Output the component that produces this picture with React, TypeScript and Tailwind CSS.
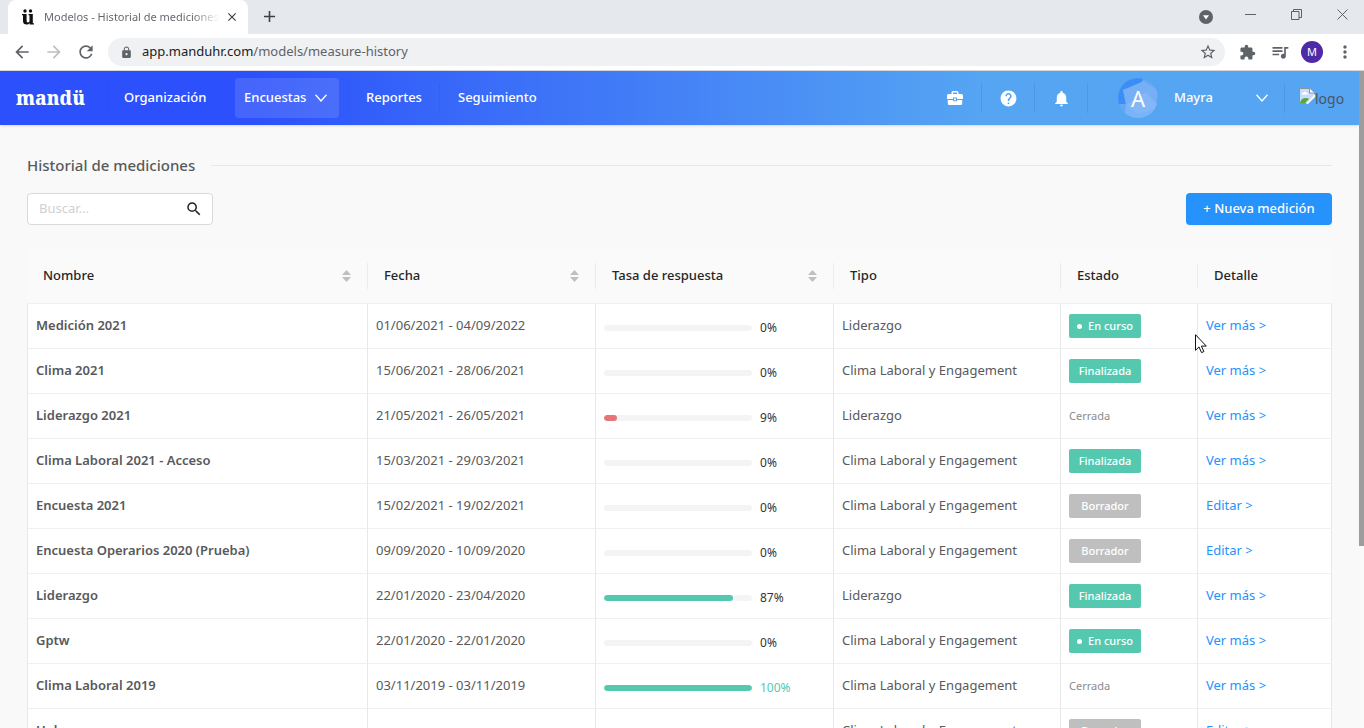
import React, { useState } from "react";
import { clsx } from "clsx";
import {
  MdArrowBack,
  MdArrowForward,
  MdClose,
  MdAdd,
  MdExtension,
  MdHelp,
  MdLock,
  MdMoreVert,
  MdNotifications,
  MdQueueMusic,
  MdRefresh,
  MdSearch,
  MdStarBorder,
} from "react-icons/md";

type Status = "En curso" | "Finalizada" | "Cerrada" | "Borrador";

interface Measure {
  name: string;
  dates: string;
  rate: number;
  type: string;
  status: Status;
}

const CLIMA = "Clima Laboral y Engagement";

const measures: Measure[] = [
  { name: "Medición 2021", dates: "01/06/2021 - 04/09/2022", rate: 0, type: "Liderazgo", status: "En curso" },
  { name: "Clima 2021", dates: "15/06/2021 - 28/06/2021", rate: 0, type: CLIMA, status: "Finalizada" },
  { name: "Liderazgo 2021", dates: "21/05/2021 - 26/05/2021", rate: 9, type: "Liderazgo", status: "Cerrada" },
  { name: "Clima Laboral 2021 - Acceso", dates: "15/03/2021 - 29/03/2021", rate: 0, type: CLIMA, status: "Finalizada" },
  { name: "Encuesta 2021", dates: "15/02/2021 - 19/02/2021", rate: 0, type: CLIMA, status: "Borrador" },
  { name: "Encuesta Operarios 2020 (Prueba)", dates: "09/09/2020 - 10/09/2020", rate: 0, type: CLIMA, status: "Borrador" },
  { name: "Liderazgo", dates: "22/01/2020 - 23/04/2020", rate: 87, type: "Liderazgo", status: "Finalizada" },
  { name: "Gptw", dates: "22/01/2020 - 22/01/2020", rate: 0, type: CLIMA, status: "En curso" },
  { name: "Clima Laboral 2019", dates: "03/11/2019 - 03/11/2019", rate: 100, type: CLIMA, status: "Cerrada" },
  { name: "Hola", dates: "", rate: 0, type: CLIMA, status: "Borrador" },
];

const columns = [
  { label: "Nombre", sortable: true, width: "w-[341px]" },
  { label: "Fecha", sortable: true, width: "w-[228px]" },
  { label: "Tasa de respuesta", sortable: true, width: "w-[238px]" },
  { label: "Tipo", sortable: false, width: "w-[227px]" },
  { label: "Estado", sortable: false, width: "w-[137px]" },
  { label: "Detalle", sortable: false, width: "w-[134px]" },
];

const Chevron = () => (
  <svg width="12" height="8" viewBox="0 0 12 8" fill="none" stroke="currentColor" strokeWidth="1.3">
    <path d="M0.5 0.8 6 7 11.5 0.8" />
  </svg>
);

const TabStrip = () => (
  <div className="flex h-[34px] shrink-0 items-end bg-[#e5e8ec] pl-2">
    <div className="flex h-[34px] w-60 items-center rounded-t-lg bg-white pl-[14px] pr-2">
      <svg width="12" height="16" viewBox="0 0 12 16" className="shrink-0" fill="#111">
        <circle cx="3" cy="2" r="1.7" />
        <circle cx="8.5" cy="2" r="1.7" />
        <path d="M0 5h4.6v6.6c0 1.3.5 1.9 1.3 1.9.7 0 1.2-.4 1.6-1V6.300H6.500V5h4.300v9.200H12v1.200H7.700v-1.300c-.8 1-1.700 1.500-3 1.500C2.300 15.600 1 14.300 1 12V6.200H0z" />
      </svg>
      <div className="ml-[10px] w-[175px] overflow-hidden whitespace-nowrap bg-linear-to-r from-[#5f6368] from-85% to-transparent bg-clip-text text-[11px] text-transparent">
        Modelos - Historial de mediciones
      </div>
      <button aria-label="Cerrar pestaña" className="ml-[6px] text-[#3c4043]">
        <MdClose size={14} />
      </button>
    </div>
    <button aria-label="Nueva pestaña" className="mb-2 ml-3 text-[#3c4043]">
      <MdAdd size={19} />
    </button>
    <div className="ml-auto flex h-[34px] items-center pr-4 text-[#5f6368]">
      <svg width="14" height="14" viewBox="0 0 14 14">
        <circle cx="7" cy="7" r="7" fill="#5f6368" />
        <path d="M4 5.200h6L7 9.500z" fill="#fff" />
      </svg>
      <div className="mb-[6px] ml-8 flex items-center gap-[35px]">
        <svg width="11" height="11" viewBox="0 0 11 11" stroke="currentColor">
          <path d="M0 5.500h11" />
        </svg>
        <svg width="11" height="11" viewBox="0 0 11 11" stroke="currentColor" fill="none">
          <path d="M.5 2.500h7.500v8H.5zM2.500 2.500v-2h8v8H8" />
        </svg>
        <svg width="11" height="11" viewBox="0 0 11 11" stroke="currentColor">
          <path d="m.5.5 10 10M10.500.5l-10 10" />
        </svg>
      </div>
    </div>
  </div>
);

const Toolbar = () => (
  <div className="flex h-[37px] shrink-0 items-center border-b border-[#d5d7da] bg-white pl-3 pr-[11px] text-[#5f6368]">
    <button aria-label="Atrás">
      <MdArrowBack size={20} />
    </button>
    <button aria-label="Adelante" className="ml-3 text-[#bdbfc2]">
      <MdArrowForward size={20} />
    </button>
    <button aria-label="Recargar" className="ml-3">
      <MdRefresh size={20} />
    </button>
    <div className="ml-3 flex h-7 grow items-center rounded-full bg-[#f0f1f3] pl-3 pr-2">
      <MdLock size={13} />
      <span className="ml-[9px] grow text-[13px]">
        <span className="text-[#202124]">app.manduhr.com</span>/models/measure-history
      </span>
      <MdStarBorder size={18} />
    </div>
    <MdExtension size={17} className="ml-[14px]" />
    <MdQueueMusic size={20} className="ml-[14px]" />
    <span className="ml-[11px] flex size-[22px] items-center justify-center rounded-full bg-[#4e2aa6] text-[11px] text-white">
      M
    </span>
    <MdMoreVert size={20} className="ml-3 -mr-[2px]" />
  </div>
);

const Divider = () => <span className="h-[30px] w-px bg-[#1e50a0]/15" />;

const NavBar = () => (
  <nav className="flex h-[54px] items-center bg-linear-to-r/srgb from-[#2c50fb] from-18% to-[#55a5f3] to-72% text-[13px] font-medium text-white shadow-sm">
    <a href="#inicio" className="w-[91px] pl-4 font-['Noto_Serif',_'DejaVu_Serif',serif] text-[19px] font-extrabold leading-6">
      mandü
    </a>
    <span className="ml-4 flex">
      <Divider />
    </span>
    <a href="#organizacion" className="ml-4 w-[83px] whitespace-nowrap">Organización</a>
    <button className="ml-7 flex h-10 w-[104px] items-center justify-between rounded-sm bg-white/12 pl-[9px] pr-3">
      Encuestas
      <Chevron />
    </button>
    <span className="ml-2 flex">
      <Divider />
    </span>
    <a href="#reportes" className="ml-[18px] w-14">Reportes</a>
    <span className="ml-[17px] flex">
      <Divider />
    </span>
    <a href="#seguimiento" className="ml-[18px]">Seguimiento</a>

    <div className="ml-auto flex items-center">
      <button aria-label="Empresa" className="flex w-[53px] justify-center">
        <svg width="16" height="14" viewBox="0 0 16 14" fill="#fff">
          <path fillRule="evenodd" d="M4.500 3V1.500Q4.500 0 6 0h4q1.500 0 1.500 1.500V3H14.500Q16 3 16 4.500V8H10V6.500H6V8H0V4.500Q0 3 1.500 3zM6 3h4V1.500H6zM.8 9H6v1.200h4V9h5.200v3.500q0 1.500-1.500 1.500H2.300Q.8 14 .8 12.500zM7 7.500h2v1.700H7z" />
        </svg>
      </button>
      <Divider />
      <button aria-label="Ayuda" className="flex w-[52px] justify-center">
        <MdHelp size={19} />
      </button>
      <Divider />
      <button aria-label="Notificaciones" className="flex w-[52px] justify-center">
        <MdNotifications size={19} />
      </button>
      <Divider />
      <button className="flex w-[196px] items-center pl-[30px] pr-4">
        <span className="relative flex size-10 items-center justify-center">
          <svg width="40" height="40" viewBox="0 0 40 40" className="absolute inset-0">
            <clipPath id="avatar">
              <circle cx="20" cy="20" r="20" />
            </clipPath>
            <g clipPath="url(#avatar)">
              <path d="M0 0h40v40H0z" fill="#62a8f5" />
              <path d="M0 0h26L22 6 5 12l3 14H0z" fill="#3b8ef5" />
              <path d="m5 12 21-9 14 9-3 19-17 5-12-9z" fill="#76aff5" />
              <path d="m8 27 20-13 12 13-9 13H6z" fill="#8fc0f9" opacity=".5" />
            </g>
          </svg>
          <span className="relative text-[22px] font-normal">A</span>
        </span>
        <span className="ml-4 grow text-left">Mayra</span>
        <Chevron />
      </button>
      <Divider />
      <span className="flex w-[74px] items-center pl-[14px] text-[14px] font-normal text-[#4b5563]">
        <svg width="16" height="16" viewBox="0 0 16 16" className="mb-[5px] shrink-0">
          <path d="M.5.5h10L15.500 5v4L9 15.500H.5z" fill="#c9dcf8" stroke="#8d939a" />
          <path d="M10.500.5V5h5" fill="#fff" stroke="#8d939a" />
          <path d="M2.500 6.500q0-2 2-2 1-2 2.700 0 1.800 0 1.800 2z" fill="#fff" />
          <path d="M1 15q1-5 6-5 2 0 3 1l-4 4z" fill="#56a839" />
          <path d="m16 6-9 10h2l7-7z" fill="#fff" />
        </svg>
        logo
      </span>
    </div>
  </nav>
);

const Sorter = () => (
  <svg width="9" height="12" viewBox="0 0 9 12" fill="#bfbfbf">
    <path d="M4.500 0 9 5H0zM4.500 12 0 7h9z" />
  </svg>
);

const RateBar = ({ rate }: { rate: number }) => (
  <div className="flex items-center pt-1">
    <div className="h-[6px] w-[148px] overflow-hidden rounded-full bg-[#f4f4f6]">
      <div
        className={clsx("h-full rounded-full", rate < 50 ? "bg-[#e67675]" : "bg-[#55c9af]")}
        style={{ width: `${rate}%` }}
      />
    </div>
    <span className={clsx("ml-2 text-[12px]", rate === 100 ? "text-[#55c9af]" : "text-[#333]")}>
      {rate}%
    </span>
  </div>
);

const StatusTag = ({ status }: { status: Status }) => {
  if (status === "Cerrada") {
    return <span className="text-[11px] text-[#8c8c8c]">Cerrada</span>;
  }
  return (
    <span
      className={clsx(
        "flex h-6 w-[72px] items-center justify-center rounded-xs text-[11px] font-medium text-white",
        status === "Borrador" ? "bg-[#bfbfbf]" : "bg-[#55c9af]"
      )}
    >
      {status === "En curso" && <span className="mr-[6px] size-[5px] rounded-full bg-white" />}
      {status}
    </span>
  );
};

const MeasureTable = () => (
  <table className="mt-[23px] w-full table-fixed border-separate border-spacing-0 text-[13px]">
    <thead>
      <tr>
        {columns.map((col, index) => (
          <th key={col.label} className={clsx("h-[55px] bg-[#fafafa] p-0 text-left font-medium text-[#262626]", col.width)}>
            <div
              className={clsx(
                "flex h-[26px] items-center justify-between pl-4 pr-4",
                index < columns.length - 1 && "border-r border-[#ececec]"
              )}
            >
              {col.label}
              {col.sortable && <Sorter />}
            </div>
          </th>
        ))}
      </tr>
    </thead>
    <tbody className="bg-white text-[#58595b]">
      {measures.map((m) => (
        <tr
          key={m.name}
          className="*:h-[45px] *:border-t *:border-r *:border-t-[#f0f0f2] *:border-r-[#e8e8e8] *:px-2 *:py-0 *:first:border-l *:first:border-l-[#e8e8e8]"
        >
          <td className="font-semibold">{m.name}</td>
          <td>{m.dates}</td>
          <td>
            <RateBar rate={m.rate} />
          </td>
          <td>{m.type}</td>
          <td>
            <StatusTag status={m.status} />
          </td>
          <td>
            <a href="#detalle" className="text-[#2692fb]">
              {m.status === "Borrador" ? "Editar" : "Ver más"} &gt;
            </a>
          </td>
        </tr>
      ))}
    </tbody>
  </table>
);

const App = () => {
  const [search, setSearch] = useState<string>("");

  return (
    <div className="relative flex h-screen flex-col overflow-hidden bg-[#f9f9fa] font-['Noto_Sans',sans-serif]">
      <TabStrip />
      <Toolbar />
      <div className="flex min-h-0 grow basis-0">
        <div className="min-w-0 grow overflow-hidden">
          <NavBar />
          <main className="px-[27px] pt-7">
            <div className="flex items-center gap-4">
              <h1 className="text-[15px] font-medium leading-6 text-[#58595b]">Historial de mediciones</h1>
              <span className="h-px grow bg-[#e8e8e8]" />
            </div>
            <div className="mt-4 flex items-center justify-between">
              <label className="flex h-8 w-[186px] items-center rounded-sm border border-[#d9d9d9] bg-white pl-[11px] pr-[9px]">
                <input
                  aria-label="Buscar"
                  value={search}
                  onChange={(e) => setSearch(e.target.value)}
                  placeholder="Buscar..."
                  className="min-w-0 grow text-[13px] outline-none placeholder:text-[#d0d0d3]"
                />
                <MdSearch size={18} className="shrink-0 text-[#222]" />
              </label>
              <button className="h-8 w-[146px] rounded-sm bg-[#2692fb] text-[13px] font-medium text-white shadow-xs">
                + Nueva medición
              </button>
            </div>
            <MeasureTable />
          </main>
        </div>
        <div className="w-[5px] shrink-0 bg-[#fafafa]">
          <div className="h-[475px] bg-[#9d9d9d]" />
        </div>
      </div>
      <svg width="12" height="20" viewBox="0 0 12 20" className="absolute left-[1195px] top-[334px]">
        <path d="M.5.700v15.600l3.500-3.400 2.500 5.700 2.400-1-2.500-5.500h4.900z" fill="#fff" stroke="#111" />
      </svg>
    </div>
  );
};

export default App;
